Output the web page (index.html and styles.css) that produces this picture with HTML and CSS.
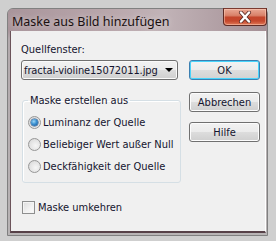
FILE: index.html
```html
<!DOCTYPE html>
<html>
<head>
<meta charset="utf-8">
<link rel="stylesheet" href="styles.css">
</head>
<body>
<div class="frame">
  <div class="titlebar">
    <span class="title">Maske aus Bild hinzufügen</span>
    <div class="close">
      <svg width="14" height="12" viewBox="0 0 14 12">
        <path d="M3 1.5 L11 10.5 M11 1.5 L3 10.5" stroke="#5a2a24" stroke-width="4" stroke-linecap="round" fill="none"/>
        <path d="M3 1.5 L11 10.5 M11 1.5 L3 10.5" stroke="#ffffff" stroke-width="2.4" stroke-linecap="round" fill="none"/>
      </svg>
    </div>
  </div>
  <div class="panel">
    <div class="main">
      <div class="left">
        <div class="label">Quellfenster:</div>
        <div class="select">
          <span class="select-text">fractal-violine15072011.jpg</span>
          <span class="arrow"></span>
        </div>
        <fieldset class="group">
          <legend>Maske erstellen aus</legend>
          <div class="opt"><span class="radio checked"></span>Luminanz der Quelle</div>
          <div class="opt"><span class="radio"></span>Beliebiger Wert außer Null</div>
          <div class="opt"><span class="radio"></span>Deckfähigkeit der Quelle</div>
        </fieldset>
      </div>
      <div class="buttons">
        <div class="btn default">OK</div>
        <div class="btn">Abbrechen</div>
        <div class="btn">Hilfe</div>
      </div>
    </div>
    <div class="check"><span class="box"></span>Maske umkehren</div>
  </div>
</div>
</body>
</html>
```
FILE: styles.css
```css
html, body {
  margin: 0;
  padding: 0;
}
body {
  width: 276px;
  height: 241px;
  overflow: hidden;
  background: #cfcfcf;
  font-family: "DejaVu Sans Condensed", "DejaVu Sans", sans-serif;
  font-size: 11px;
  color: #14142e;
}
.frame {
  margin: 8px 0 0 7px;
  width: 261px;
  height: 228px;
  box-sizing: border-box;
  border: 1px solid #808080;
  border-radius: 6px 6px 0 0;
  background: linear-gradient(to bottom, #b6a5aa 0, #a9969c 22px, #b3aaad 30px, #b8b4b5 100%);
  display: flex;
  flex-direction: column;
}
.titlebar {
  height: 22px;
  display: flex;
  align-items: flex-start;
  justify-content: space-between;
  background: linear-gradient(to right, #a9959b 0%, #b9a7ac 40%, #c1b3b7 60%, #a48f95 100%);
  border-radius: 5px 5px 0 0;
}
.title {
  font-family: "Noto Sans", "Open Sans", sans-serif;
  font-size: 12.5px;
  line-height: 16px;
  padding: 5px 0 0 4px;
  color: #1a1010;
  text-shadow: 0 0 6px rgba(255,255,255,0.6);
}
.close {
  width: 44px;
  height: 18px;
  margin-top: -1px;
  box-sizing: border-box;
  border: 1px solid #5e2b25;
  border-top-color: #7a3a30;
  border-radius: 0 0 4px 4px;
  background: linear-gradient(to bottom, #e9a894 0%, #d9826a 40%, #c4462c 52%, #c5482d 75%, #e07a58 100%);
  box-shadow: inset 0 0 0 1px rgba(255,210,190,0.5);
  display: flex;
  align-items: center;
  justify-content: center;
}
.close svg { display: block; }
.panel {
  flex: 1;
  margin: 0 1px 2px 2px;
  background: #f0f0f0;
  border-left: 1px solid #6b5359;
  border-right: 1px solid #ffffff;
  border-bottom: 2px solid #574148;
  padding: 12px 0 0 10px;
}
.main {
  display: flex;
  gap: 8px;
}
.left {
  width: 160px;
  display: flex;
  flex-direction: column;
}
.label {
  line-height: 13px;
  height: 13px;
}
.select {
  margin-top: 4px;
  width: 157px;
  height: 20px;
  box-sizing: border-box;
  border: 1px solid #707070;
  border-radius: 3px;
  background: linear-gradient(to bottom, #f2f2f2 0%, #ebebeb 50%, #dddddd 50%, #cfcfcf 100%);
  box-shadow: inset 0 0 0 1px #fafafa;
  display: flex;
  align-items: center;
  justify-content: space-between;
  padding: 0 4px 0 2px;
  white-space: nowrap;
  letter-spacing: -0.1px;
}
.arrow {
  width: 0;
  height: 0;
  border-left: 4px solid transparent;
  border-right: 4px solid transparent;
  border-top: 4px solid #000;
  flex: none;
}
.group {
  margin: 14px 0 0 1px;
  width: 159px;
  box-sizing: border-box;
  border: 1px solid #d5dfe5;
  border-radius: 3px;
  box-shadow: inset 1px 1px 0 #ffffff;
  padding: 4px 0 5px 5px;
  min-width: 0;
}
.group legend {
  padding: 0 2px;
  line-height: 13px;
}
.opt {
  height: 22px;
  display: flex;
  align-items: center;
  white-space: nowrap;
}
.radio {
  width: 13px;
  height: 13px;
  box-sizing: border-box;
  border-radius: 50%;
  border: 1px solid #979797;
  background: radial-gradient(circle at 60% 60%, #f6f6f6 0%, #e2e2e2 60%, #cfcfcf 100%);
  margin-right: 2px;
  display: flex;
  align-items: center;
  justify-content: center;
  flex: none;
}
.radio.checked::after {
  content: "";
  width: 7px;
  height: 7px;
  border-radius: 50%;
  background: radial-gradient(circle at 40% 35%, #9fd8f6 0%, #3a8fd0 45%, #1a4f8c 100%);
  box-shadow: 0 0 0 0.5px #2a5080;
}
.buttons {
  width: 71px;
  padding-top: 17px;
  display: flex;
  flex-direction: column;
}
.btn {
  height: 20px;
  box-sizing: border-box;
  border: 1px solid #707070;
  border-radius: 3px;
  background: linear-gradient(to bottom, #f2f2f2 0%, #ebebeb 50%, #dddddd 50%, #cfcfcf 100%);
  box-shadow: inset 0 0 0 1px #fcfcfc;
  display: flex;
  align-items: center;
  justify-content: center;
}
.btn + .btn { margin-top: 10px; }
.btn.default {
  margin-bottom: 2px;
  border-color: #3c7fb1;
  box-shadow: inset 0 0 0 1px #48d4fb;
  background: linear-gradient(to bottom, #f3f3f3 0%, #ececec 50%, #dedede 50%, #d2d2d2 100%);
}
.check {
  margin: 18px 0 0 1px;
  height: 13px;
  display: flex;
  align-items: center;
}
.box {
  width: 13px;
  height: 13px;
  box-sizing: border-box;
  border: 1px solid #8e8f8f;
  background: linear-gradient(135deg, #dcdcdc 0%, #f2f2f2 60%, #fbfbfb 100%);
  box-shadow: inset 0 0 0 1px #f4f4f4;
  margin-right: 3px;
  flex: none;
}
```
